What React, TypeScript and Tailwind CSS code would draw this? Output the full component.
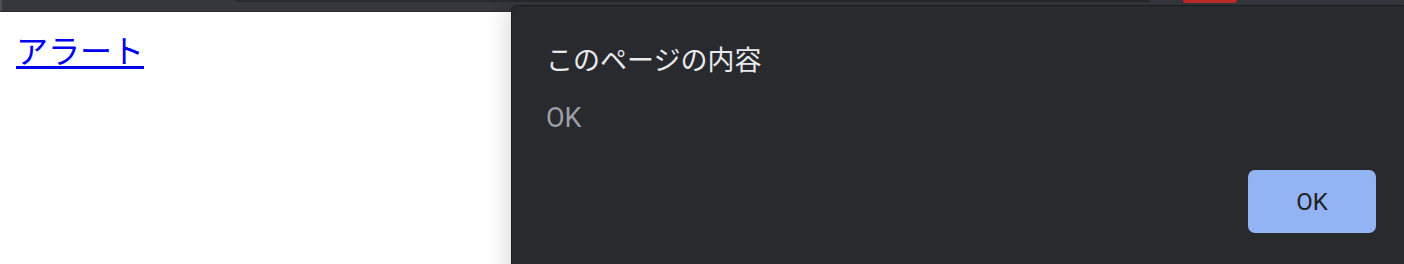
import React from "react";

const cjk = '"Noto Sans CJK JP", "Noto Sans", sans-serif';
const ui = 'Roboto, "Noto Sans CJK JP", sans-serif';

export default function App() {
  return (
    <div className="relative w-[1404px] h-[264px] overflow-hidden bg-white">
      {/* ── Browser toolbar edge ─────────────────────────────── */}
      <div className="flex items-start h-[12px] bg-[#34373b] border-b border-[#2a2c2f]">
        <div className="w-[2px] h-full bg-[#4b4e52]" />
        <div className="ml-[233px] w-[915px] h-[2px] rounded-b-[3px] bg-[#27292c]" />
        <div className="ml-[33px] w-[54px] h-[3px] rounded-b-[3px] bg-[#c42b2b]" />
      </div>

      {/* ── Page ─────────────────────────────────────────────── */}
      <div className="px-4 pt-[14px]">
        <a
          href="#"
          className="text-[32px] leading-[46px] text-[#0000ee] underline underline-offset-[3px]"
          style={{ fontFamily: cjk }}
        >
          アラート
        </a>
      </div>

      {/* ── Alert dialog ─────────────────────────────────────── */}
      <div
        className="absolute left-[511px] top-[5px] w-[900px] h-[290px] flex flex-col pl-[34px] pr-[34px] pt-[35px] bg-[#292a2d] border border-[#1b1c1e] rounded-tl-[6px] shadow-[-4px_0_22px_rgba(0,0,0,0.14)]"
        style={{ fontFamily: ui }}
      >
        <p className="text-[27px] leading-[36px] text-[#e8eaed]" style={{ fontFamily: cjk }}>
          このページの内容
        </p>
        <p className="mt-[23px] text-[27px] leading-[36px] text-[#9aa0a6]">OK</p>
        <div className="flex justify-end mt-[34px]">
          <button className="w-[128px] h-[63px] rounded-[7px] bg-[#92b4f3] text-[24px] font-normal text-[#202124]">
            OK
          </button>
        </div>
      </div>
    </div>
  );
}
